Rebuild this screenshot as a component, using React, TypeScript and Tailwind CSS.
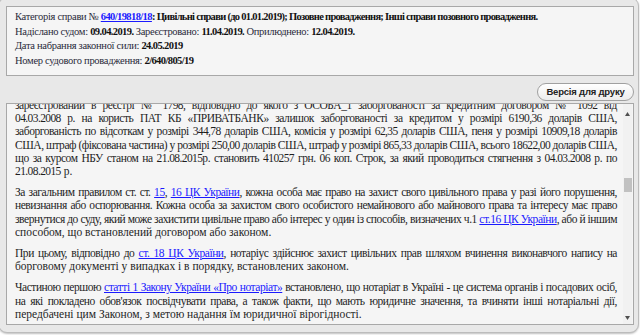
import React from 'react';

// digit runs in the source page are set tighter than the letters
const n = (s: string) =>
  s.split(/(\d[\d.,/]*\d|\d)/).map((part, i) =>
    i % 2 === 1 ? (
      <span key={i} className="tracking-[-0.6px]">
        {part}
      </span>
    ) : (
      part
    )
  );

const A = ({ children }: { children: React.ReactNode }) => (
  <a href="#" className="text-[#1a1aff] underline">
    {children}
  </a>
);

// every line of the scrolled text is its own justified row, so breaks match the page
const Line = ({ children, last }: { children: React.ReactNode; last?: boolean }) => (
  <span className={last ? 'block whitespace-nowrap' : 'block [text-align-last:justify] [word-spacing:-1px] tracking-[-0.45px]'}>
    {children}
  </span>
);

const ScrollBar = () => (
  <div className="w-[9px] shrink-0 flex flex-col items-center bg-[#f1f1f1] mr-[1px]">
    <svg width="5" height="4" viewBox="0 0 5 4" className="mt-[8px]">
      <path d="M2.5 0 L5 4 L0 4 Z" fill="#505050" />
    </svg>
    <div className="mt-[62px] w-[8px] h-[14px] bg-[#c1c1c1]" />
    <div className="flex-1" />
    <svg width="5" height="4" viewBox="0 0 5 4" className="mb-[4px]">
      <path d="M0 0 L5 0 L2.5 4 Z" fill="#505050" />
    </svg>
  </div>
);

export default function App() {
  return (
    <div className="w-[640px] h-[335px] overflow-hidden bg-white" style={{ fontFamily: '"Liberation Serif", "Times New Roman", serif' }}>
      <div className="-ml-[2px] -mt-[3px] w-[641px] h-[336px] rounded-[9px] border border-[#bcbcbc] bg-[#e8e8e8] shadow-[0_1px_2px_rgba(0,0,0,0.25)] pl-[7px] pr-[4px] pt-[8px] flex flex-col">
        <div className="h-[70px] border border-[#a8a8a8] bg-[#f5f5f5] pl-[8px] pt-[3px] text-[10.5px] leading-[14.5px] text-[#2a2a3a] whitespace-nowrap tracking-[-0.3px]">
          <div>
            Категорія справи № <a href="#" className="font-bold text-[#1a1aff] underline tracking-[-0.6px]">640/19818/18</a>
            <b className="text-[#111] tracking-[-0.7px]">: Цивільні справи (до 01.01.2019); Позовне провадження; Інші справи позовного провадження.</b>
          </div>
          <div>
            Надіслано судом: <b className="text-[#111] tracking-[-0.6px]">09.04.2019.</b> Зареєстровано: <b className="text-[#111] tracking-[-0.6px]">11.04.2019.</b> Оприлюднено: <b className="text-[#111] tracking-[-0.6px]">12.04.2019.</b>
          </div>
          <div>
            Дата набрання законної сили: <b className="text-[#111] tracking-[-0.6px]">24.05.2019</b>
          </div>
          <div>
            Номер судового провадження: <b className="text-[#111] tracking-[-0.6px]">2/640/805/19</b>
          </div>
        </div>

        <div className="flex justify-end mt-[7px]">
          <button
            className="h-[18px] w-[97px] rounded-full border border-[#a0a0a0] bg-gradient-to-b from-white to-[#ececec] text-[9.5px] font-bold tracking-[-0.2px] text-[#222] leading-none"
            style={{ fontFamily: '"Liberation Sans", Arial, sans-serif' }}
          >
            Версія для друку
          </button>
        </div>

        <div className="mt-[2px] h-[222px] border border-[#a8a8a8] bg-[#f5f5f5] flex">
          <div className="flex-1 overflow-hidden pl-[8px] pr-[6px] text-[11.5px] leading-[13.2px] text-[#1e1e1e]">
            <div className="-mt-[5px]">
              <p className="mb-[8px]">
                <Line>{n('зареєстрований в реєстрі № 1798, відповідно до якого з ОСОБА_1 заборгованості за кредитним договором № 1092 від')}</Line>
                <Line>{n('04.03.2008 р. на користь ПАТ КБ «ПРИВАТБАНК» залишок заборгованості за кредитом у розмірі 6190,36 доларів США,')}</Line>
                <Line>{n('заборгованість по відсоткам у розмірі 344,78 доларів США, комісія у розмірі 62,35 доларів США, пеня у розмірі 10909,18 доларів')}</Line>
                <Line>{n('США, штраф (фіксована частина) у розмірі 250,00 доларів США, штраф у розмірі 865,33 доларів США, всього 18622,00 доларів США,')}</Line>
                <Line>{n('що за курсом НБУ станом на 21.08.2015р. становить 410257 грн. 06 коп. Строк, за який проводиться стягнення з 04.03.2008 р. по')}</Line>
                <Line last>{n('21.08.2015 р.')}</Line>
              </p>
              <p className="mb-[8px]">
                <Line>
                  За загальним правилом ст. ст. <A>15</A>, <A>16 ЦК України</A>, кожна особа має право на захист свого цивільного права у разі його порушення,
                </Line>
                <Line>невизнання або оспорювання. Кожна особа за захистом свого особистого немайнового або майнового права та інтересу має право</Line>
                <Line>
                  звернутися до суду, який може захистити цивільне право або інтерес у один із способів, визначених ч.1 <A>ст.16 ЦК України</A>, або й іншим
                </Line>
                <Line last>способом, що встановлений договором або законом.</Line>
              </p>
              <p className="mb-[8px]">
                <Line>
                  При цьому, відповідно до <A>ст. 18 ЦК України</A>, нотаріус здійснює захист цивільних прав шляхом вчинення виконавчого напису на
                </Line>
                <Line last>борговому документі у випадках і в порядку, встановлених законом.</Line>
              </p>
              <p className="mb-[8px]">
                <Line>
                  Частиною першою <A>статті 1 Закону України «Про нотаріат»</A> встановлено, що нотаріат в Україні - це система органів і посадових осіб,
                </Line>
                <Line>на які покладено обов'язок посвідчувати права, а також факти, що мають юридичне значення, та вчиняти інші нотаріальні дії,</Line>
                <Line last>передбачені цим Законом, з метою надання їм юридичної вірогідності.</Line>
              </p>
            </div>
          </div>
          <ScrollBar />
        </div>
      </div>
    </div>
  );
}
